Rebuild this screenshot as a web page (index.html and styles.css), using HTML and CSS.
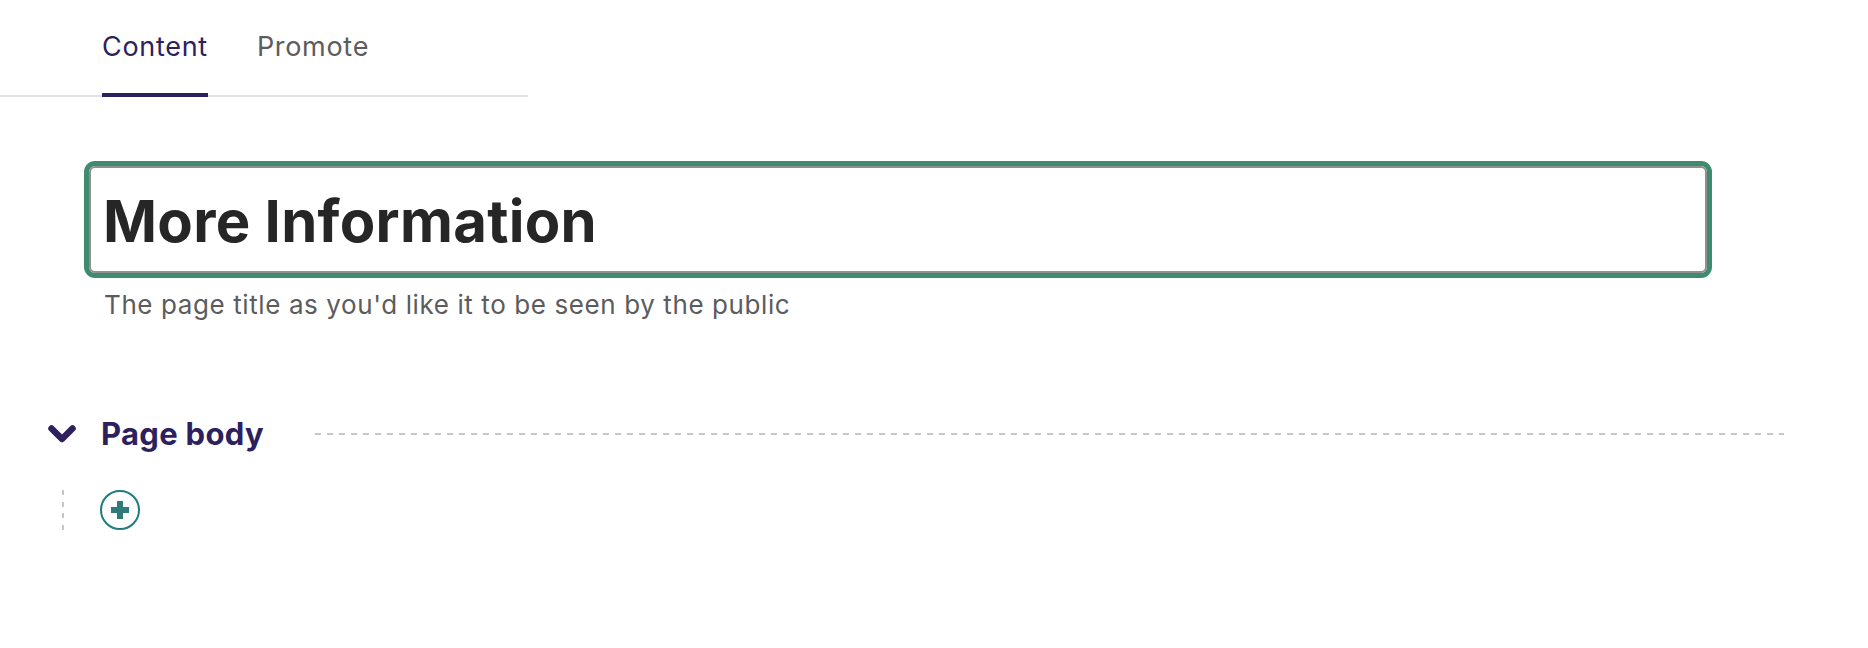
FILE: index.html
```html
<!DOCTYPE html>
<html lang="en">
<head>
<meta charset="utf-8">
<title>Edit page</title>
<link rel="stylesheet" href="styles.css">
</head>
<body>
  <nav class="tabs">
    <a class="tab tab-active" href="#">Content</a>
    <a class="tab" href="#">Promote</a>
  </nav>

  <section class="title-block">
    <div class="title-field">More Information</div>
    <p class="help">The page title as you'd like it to be seen by the public</p>
  </section>

  <section class="panel">
    <div class="panel-header">
      <svg class="chevron" width="28" height="18" viewBox="0 0 28 18" aria-hidden="true">
        <polyline points="3.5,3.5 14,14 24.5,3.5" fill="none" stroke="#2e1f5e" stroke-width="6.5" stroke-linecap="round" stroke-linejoin="round"/>
      </svg>
      <h2 class="panel-title">Page body</h2>
      <div class="panel-rule"></div>
    </div>
    <div class="panel-body">
      <div class="vline"></div>
      <button class="add-btn" type="button" aria-label="Add block">
        <svg width="40" height="40" viewBox="0 0 40 40" aria-hidden="true">
          <circle cx="20" cy="20" r="19" fill="none" stroke="#1f7b7c" stroke-width="2"/>
          <path d="M20 11 V29 M11 20 H29" stroke="#2f7a7b" stroke-width="6" stroke-linecap="butt"/>
        </svg>
      </button>
    </div>
  </section>
</body>
</html>
```

FILE: styles.css
```css
* { box-sizing: border-box; }

body {
  margin: 0;
  background: #ffffff;
  font-family: Inter, "Noto Sans", "Liberation Sans", sans-serif;
  color: #262626;
}

.tabs {
  display: flex;
  align-items: flex-start;
  gap: 49px;
  width: 528px;
  padding-left: 102px;
  border-bottom: 2px solid #e0e0e0;
}

.tab {
  display: block;
  padding: 31px 0 30px;
  margin-bottom: -2px;
  font-size: 27px;
  line-height: 32px;
  font-weight: 400;
  letter-spacing: 0.7px;
  color: #5c5c5c;
  text-decoration: none;
  border-bottom: 4px solid transparent;
}

.tab-active {
  color: #2e1f5e;
  border-bottom-color: #2e1f5e;
}

.title-block {
  margin-top: 69px;
}

.title-field {
  margin-left: 89px;
  width: 1618px;
  height: 107px;
  padding: 19px 12px 0;
  border: 2px solid #8f8f8f;
  border-radius: 6px;
  box-shadow: 0 0 0 5px #3f8b6f;
  font-size: 58px;
  line-height: 68px;
  font-weight: 700;
  letter-spacing: 0.3px;
  color: #262626;
}

.help {
  margin: 17px 0 0 104px;
  font-size: 26px;
  line-height: 30px;
  letter-spacing: 0.6px;
  color: #5c5c5c;
}

.panel {
  margin-top: 96px;
}

.panel-header {
  display: flex;
  align-items: center;
  width: 1784px;
  padding-left: 48px;
}

.chevron {
  display: block;
  flex: none;
}

.panel-title {
  margin: 0 0 0 25px;
  font-size: 31px;
  line-height: 36px;
  font-weight: 700;
  letter-spacing: 0.3px;
  color: #2e1f5e;
}

.panel-rule {
  flex: 1;
  height: 2px;
  margin-left: 51px;
  background: repeating-linear-gradient(to right, #c6c6c6 0 6px, transparent 6px 12px);
}

.panel-body {
  display: flex;
  align-items: flex-end;
  gap: 36px;
  margin-top: 38px;
  padding-left: 62px;
}

.vline {
  width: 2px;
  height: 40px;
  background: repeating-linear-gradient(to bottom, #c6c6c6 0 5px, transparent 5px 11.67px);
}

.add-btn {
  display: block;
  width: 40px;
  height: 40px;
  padding: 0;
  border: 0;
  background: transparent;
  cursor: pointer;
}

.add-btn svg {
  display: block;
}
```
